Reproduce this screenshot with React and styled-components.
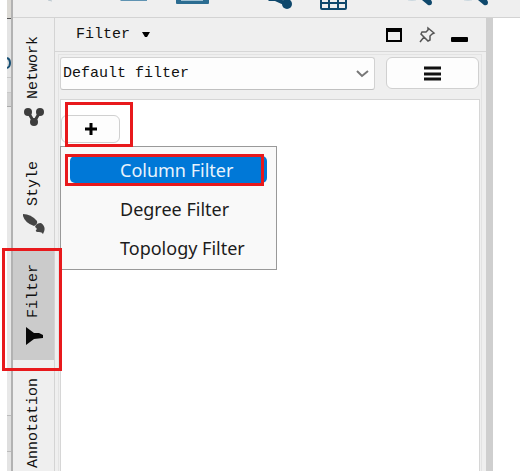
import React from "react";
import styled, { createGlobalStyle, css } from "styled-components";

const GlobalStyle = createGlobalStyle`
  *, *::before, *::after { box-sizing: border-box; }
  body { margin: 0; background: #fff; overflow: hidden; }
  button, select { font: inherit; color: inherit; margin: 0; }
`;

const mono = `"Liberation Mono", monospace`;

const Screen = styled.div`
  display: flex;
  height: 100vh;
  padding-left: 7px;
  overflow: hidden;
  font: 15px/20px ${mono};
  color: #111;
`;

const BackWindow = styled.div`
  flex: 0 0 4px;
  display: flex;
  flex-direction: column;
  background: #e4e4e4;
`;

const BackRow = styled.div`
  height: ${(p) => p.$size}px;
  flex-shrink: 0;
  background: ${(p) => p.$tone};
  border-bottom: 1px solid ${(p) => p.$line};
`;

const BackGlyph = styled.svg`
  display: block;
  flex-shrink: 0;
  width: 4px;
  height: 12px;
  margin-top: 38px;
`;

const Window = styled.div`
  flex: 1;
  min-width: 0;
  display: flex;
  flex-direction: column;
  border-left: 2px solid #b2b2b2;
`;

const Toolbar = styled.header`
  display: flex;
  gap: 56px;
  height: 18px;
  flex-shrink: 0;
  padding-left: 31px;
  overflow: hidden;
  background: #efefef;
  border-bottom: 1px solid #d3d3d3;
`;

const ToolGroup = styled.div`
  display: flex;
  flex-shrink: 0;
  gap: 26px;
`;

const ToolButton = styled.button`
  flex-shrink: 0;
  width: ${(p) => p.$width}px;
  height: 12px;
  padding: 0;
  border: 0;
  background: none;
  svg { display: block; width: 100%; height: 12px; }
`;

const Workspace = styled.div`
  flex: 1;
  min-height: 0;
  display: flex;
`;

const TabRail = styled.nav`
  flex: 0 0 42px;
  display: flex;
  flex-direction: column;
  background: #efefef;
  border-right: 1px solid #d4d4d4;
`;

const Tab = styled.button`
  position: relative;
  display: flex;
  flex-direction: column;
  align-items: center;
  justify-content: flex-end;
  gap: 8px;
  flex-shrink: 0;
  height: ${(p) => p.$size}px;
  padding: 0 0 14px;
  border: 0;
  background: ${(p) => (p.$active ? "#cbcbcb" : "transparent")};
  svg { display: block; width: 22px; height: 20px; }
`;

const TabLabel = styled.span`
  writing-mode: vertical-rl;
  transform: rotate(180deg);
  line-height: 20px;
`;

const Panel = styled.main`
  flex: 1;
  min-width: 0;
  display: flex;
  flex-direction: column;
  background: #efefef;
`;

const PanelHeader = styled.div`
  display: flex;
  align-items: center;
  justify-content: space-between;
  height: 34px;
  flex-shrink: 0;
  padding: 0 17px 0 21px;
  border-bottom: 1px solid #d6d6d6;
`;

const TitleButton = styled.button`
  display: flex;
  align-items: center;
  gap: 12px;
  padding: 0;
  border: 0;
  background: none;
  svg { display: block; width: 8px; height: 5px; }
`;

const HeaderActions = styled.div`
  display: flex;
  gap: 15px;
`;

const IconButton = styled.button`
  padding: 0;
  border: 0;
  background: none;
  svg { display: block; width: 18px; height: 18px; }
`;

const PanelBody = styled.div`
  flex: 1;
  min-height: 0;
  display: flex;
  flex-direction: column;
  gap: 8px;
  margin: 2px 4px 0 3px;
  padding: 2px 1px 0 1px;
  border: solid #e3e3e3;
  border-width: 1px 1px 0;
`;

const FilterRow = styled.div`
  display: flex;
  gap: 11px;
  height: 34px;
  padding-right: 1px;
`;

const SelectBox = styled.div`
  position: relative;
  flex: 1;
  min-width: 0;
  svg {
    position: absolute;
    right: 6px;
    top: 13px;
    width: 13px;
    height: 8px;
    pointer-events: none;
  }
`;

const FilterSelect = styled.select`
  appearance: none;
  width: 100%;
  height: 33px;
  padding: 0 24px 0 2px;
  border: 1px solid #d2d2d2;
  border-bottom-color: #c0c0c0;
  border-radius: 3px;
  background: #fdfdfd;
`;

const raised = css`
  display: flex;
  align-items: center;
  justify-content: center;
  padding: 0;
  border: 1px solid #d0d0d0;
  border-radius: 6px;
  background: #fdfdfd;
`;

const OptionsButton = styled.button`
  ${raised}
  width: 93px;
  height: 32px;
  svg { display: block; width: 17px; height: 15px; }
`;

const FilterList = styled.section`
  flex: 1;
  padding: 15px 0 0;
  border: 1px solid #d6d6d6;
  border-bottom: 0;
  background: #fff;
`;

const AddArea = styled.div`
  position: relative;
  width: 59px;
`;

const AddButton = styled.button`
  ${raised}
  width: 59px;
  height: 28px;
  svg { display: block; width: 14px; height: 14px; }
`;

const Menu = styled.div`
  position: absolute;
  left: -1px;
  top: 31px;
  z-index: 1;
  width: 217px;
  padding: 9px 9px 8px;
  border: 1px solid #999;
  background: #f9f9f9;
  font: 18px/25px "Noto Sans", sans-serif;
`;

const MenuItem = styled.button`
  position: relative;
  display: block;
  width: 100%;
  height: 27px;
  margin-bottom: 12px;
  padding: 2px 0 0 50px;
  border: 0;
  border-radius: 5px;
  background: ${(p) => (p.$active ? "#0078d7" : "transparent")};
  color: ${(p) => (p.$active ? "#e8f3fc" : "#1c1c1c")};
  text-align: left;
  white-space: nowrap;
  &:last-child { margin-bottom: 0; }
`;

const Callout = styled.span`
  position: absolute;
  z-index: 2;
  inset: ${(p) => p.$inset};
  border: 3px solid #e8191c;
  pointer-events: none;
`;

const Divider = styled.div`
  flex: 0 0 7px;
  background: #cfcfcf;
`;

const Canvas = styled.div`
  flex: 0 0 27px;
  background: #fff;
`;

const blue = "#0f486c";

const Handle = () => (
  <svg viewBox="0 0 30 12">
    <path d="M4 0q4 1 8 0" fill="none" stroke="#cbd8e0" />
    <path d="M18 0h9l1 2q0 4-4 3z" fill={blue} />
  </svg>
);

const NetworkIcon = () => (
  <svg viewBox="0 0 22 20">
    <path d="M5 5l6 10 6-10" fill="none" stroke="#3d3d3d" strokeWidth="3" />
    <g fill="#3d3d3d"><circle cx="5" cy="5" r="4" /><circle cx="17" cy="5" r="4" /><circle cx="11" cy="15" r="4" /></g>
  </svg>
);

const BrushIcon = () => (
  <svg viewBox="0 0 22 20" fill="#454545">
    <path d="M0 0Q8 0 14 7q1 3-3 5Q2 9 0 2z" />
    <path d="M12 13q1-4 6-4 6 4 2 11-1-2-4-2-4 0-3-2 2-1-1-3z" />
  </svg>
);

const FunnelIcon = () => (
  <svg viewBox="0 0 22 20">
    <path d="M3 1l8 6h5l4 2v3l-9 1-8 6z" fill="#080808" />
  </svg>
);

export default function App() {
  return (
    <>
      <GlobalStyle />
      <Screen>
        <BackWindow>
          <BackRow $size={19} $tone="#dcdad5" $line="#555" />
          <BackGlyph viewBox="0 0 4 12"><path d="M0 1q3 1 3 5t-3 5" fill="none" stroke="#174f73" strokeWidth="2" /></BackGlyph>
          <BackRow $size={9} $tone="#e4e4e4" $line="#c8c8c8" />
          <BackRow $size={15} $tone="#e4e4e4" $line="#c8c8c8" />
          <BackRow $size={14} $tone="#d4d4d4" $line="#aaa" />
          <BackRow $size={309} $tone="#e8e8e8" $line="#bbb" />
          <BackRow $size={36} $tone="#dedede" $line="#bbb" />
        </BackWindow>
        <Window>
          <Toolbar>
            <ToolGroup>
              <ToolButton $width={16} aria-label="Open"><svg viewBox="0 0 16 12"><path d="M4 0l4 1" stroke="#b9c6ce" /></svg></ToolButton>
            </ToolGroup>
            <ToolGroup>
              <ToolButton $width={32} aria-label="Import network"><svg viewBox="0 0 32 12"><path d="M4 0h27v1H5z" fill="#5f93b2" /></svg></ToolButton>
              <ToolButton $width={36} aria-label="Save"><svg viewBox="0 0 36 12"><path d="M2 0h33v3q0 1-1 1H3q-1 0-1-1z" fill="#2b6c91" /><path d="M7 0h22v1H7z" fill="#9fc0d2" /></svg></ToolButton>
            </ToolGroup>
            <ToolGroup>
              <ToolButton $width={28} aria-label="Share network"><svg viewBox="0 0 28 12" fill={blue}><path d="M2 0h14l6 1-2 5L9 1H3z" /><circle cx="21" cy="4" r="5" /></svg></ToolButton>
              <ToolButton $width={28} aria-label="Table"><svg viewBox="0 0 28 12" fill="none" stroke={blue} strokeWidth="2"><path d="M1 0v8q0 1 1 1h23q1 0 1-1V0M1 3h25M9 0v9M18 0v9" /></svg></ToolButton>
            </ToolGroup>
            <ToolGroup>
              <ToolButton $width={30} aria-label="Zoom in"><Handle /></ToolButton>
              <ToolButton $width={30} aria-label="Zoom out"><Handle /></ToolButton>
            </ToolGroup>
          </Toolbar>
          <Workspace>
            <TabRail>
              <Tab $size={123}><TabLabel>Network</TabLabel><NetworkIcon /></Tab>
              <Tab $size={107}><TabLabel>Style</TabLabel><BrushIcon /></Tab>
              <Tab $size={112} $active><TabLabel>Filter</TabLabel><FunnelIcon /><Callout $inset="0 -8px -11px -11px" /></Tab>
              <Tab $size={122}><TabLabel>Annotation</TabLabel></Tab>
            </TabRail>
            <Panel>
              <PanelHeader>
                <TitleButton>Filter<svg viewBox="0 0 8 5"><path d="M0 0h8L5 5H3z" /></svg></TitleButton>
                <HeaderActions>
                  <IconButton aria-label="Maximize"><svg viewBox="0 0 18 18"><path d="M2 3h14v12H2z" fill="none" stroke="#000" strokeWidth="2" /><path d="M1 2h16v4H1z" /></svg></IconButton>
                  <IconButton aria-label="Pin"><svg viewBox="0 0 18 18" fill="none" stroke="#555" strokeWidth="1.5"><path d="M10 2l6 5-2 1-2 2v4l-2 1-7-7 1-2h4l2-2zM6 11l-4 5" /></svg></IconButton>
                  <IconButton aria-label="Minimize"><svg viewBox="0 0 18 18"><rect x="0" y="11" width="17" height="5" rx="1" /></svg></IconButton>
                </HeaderActions>
              </PanelHeader>
              <PanelBody>
                <FilterRow>
                  <SelectBox>
                    <FilterSelect aria-label="Filter set"><option>Default filter</option></FilterSelect>
                    <svg viewBox="0 0 13 8"><path d="M1 1l5 5 6-5" fill="none" stroke="#777" strokeWidth="2" /></svg>
                  </SelectBox>
                  <OptionsButton aria-label="Options"><svg viewBox="0 0 17 15" stroke="#111" strokeWidth="3"><path d="M0 2h17M0 8h17M0 13h17" /></svg></OptionsButton>
                </FilterRow>
                <FilterList>
                  <AddArea>
                    <AddButton aria-label="Add filter"><svg viewBox="0 0 14 14" stroke="#000" strokeWidth="3"><path d="M7 1v12M1 7h12" /></svg></AddButton>
                    <Callout $inset="-13px -13px -4px 4px" />
                    <Menu>
                      <MenuItem $active>Column Filter<Callout $inset="-2px 3px -3px -5px" /></MenuItem>
                      <MenuItem>Degree Filter</MenuItem>
                      <MenuItem>Topology Filter</MenuItem>
                    </Menu>
                  </AddArea>
                </FilterList>
              </PanelBody>
            </Panel>
            <Divider />
            <Canvas />
          </Workspace>
        </Window>
      </Screen>
    </>
  );
}
